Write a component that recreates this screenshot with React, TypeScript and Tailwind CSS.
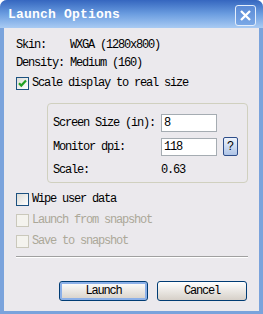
import React from "react";

const mono = { fontFamily: '"Liberation Mono", "DejaVu Sans Mono", monospace' };

function CheckBox({ checked, disabled }: { checked?: boolean; disabled?: boolean }) {
  return (
    <div
      className={
        "w-[13px] h-[13px] shrink-0 border flex items-center justify-center " +
        (disabled
          ? "border-[#cac8bb] bg-[#f4f3ee]"
          : "border-[#1c5180] bg-gradient-to-br from-[#dcdcd7] to-[#ffffff]")
      }
    >
      {checked && (
        <svg width="11" height="11" viewBox="0 0 11 11">
          <path d="M2 5.2 L4.3 7.6 L9 2.6" stroke="#21a121" strokeWidth="2.2" fill="none" />
        </svg>
      )}
    </div>
  );
}

export default function App() {
  return (
    <div
      className="w-[263px] h-[314px] flex flex-col rounded-t-[7px] overflow-hidden bg-[#7aa3dc] text-[12px] tracking-[-1.2px] text-black"
      style={mono}
    >
      {/* Title bar */}
      <div className="h-[28px] shrink-0 flex items-center pl-[8px] pr-[7px] bg-gradient-to-b from-[#3566bf] via-[#6b9de0] to-[#a9cbf3]">
        <span className="flex-1 text-white font-bold text-[13px] tracking-[0.2px] leading-none mt-[1px]">
          Launch Options
        </span>
        <div className="w-[21px] h-[21px] rounded-[3px] border border-[#e4eefb] bg-gradient-to-b from-[#5a8ad6] to-[#7aa8e6] flex items-center justify-center mt-[2px]">
          <svg width="13" height="13" viewBox="0 0 13 13">
            <path d="M2 2 L11 11 M11 2 L2 11" stroke="white" strokeWidth="2.3" />
          </svg>
        </div>
      </div>

      {/* Client area */}
      <div className="flex-1 mx-[4px] mb-[3px] bg-[#ebe9ed] flex flex-col pl-[12px] pr-[11px] pt-[8px]">
        <div className="h-[18px] flex items-center">
          <span className="w-[54px]">Skin:</span>
          <span>WXGA (1280x800)</span>
        </div>
        <div className="h-[18px] flex items-center">
          <span className="w-[54px]">Density:</span>
          <span>Medium (160)</span>
        </div>
        <div className="h-[18px] mt-[2px] flex items-center gap-[3px]">
          <CheckBox checked />
          <span>Scale display to real size</span>
        </div>

        {/* Group box */}
        <div className="ml-[31px] mt-[11px] w-[201px] h-[80px] border border-[#d0d0bf] rounded-[4px] flex flex-col pl-[5px] pt-[10px]">
          <div className="h-[18px] flex items-center">
            <span className="w-[108px]">Screen Size (in):</span>
            <div className="w-[56px] h-[18px] bg-white border border-[#a5acb2] flex items-center pl-[2px]">8</div>
          </div>
          <div className="h-[19px] mt-[5px] flex items-center">
            <span className="w-[108px]">Monitor dpi:</span>
            <div className="w-[56px] h-[18px] bg-white border border-[#a5acb2] flex items-center pl-[2px]">118</div>
            <div className="ml-[6px] w-[15px] h-[19px] rounded-[2px] border border-[#2e4e8a] bg-gradient-to-b from-[#eef3fb] to-[#aec4e6] flex items-center justify-center tracking-normal text-[12px]">
              ?
            </div>
          </div>
          <div className="h-[18px] mt-[5px] flex items-center">
            <span className="w-[108px]">Scale:</span>
            <span>0.63</span>
          </div>
        </div>

        <div className="h-[18px] mt-[7px] flex items-center gap-[3px]">
          <CheckBox />
          <span>Wipe user data</span>
        </div>
        <div className="h-[18px] mt-[3px] flex items-center gap-[3px] text-[#aca899]">
          <CheckBox disabled />
          <span>Launch from snapshot</span>
        </div>
        <div className="h-[18px] mt-[3px] flex items-center gap-[3px] text-[#aca899]">
          <CheckBox disabled />
          <span>Save to snapshot</span>
        </div>

        <div className="mt-[6px] h-[1px] bg-[#a0a0a0] border-b border-white box-content" />

        <div className="mt-[23px] flex justify-end gap-[9px] pr-[1px]">
          <div className="w-[89px] h-[20px] rounded-[3px] border border-[#003c74] bg-gradient-to-b from-[#ffffff] to-[#d6d0c8] flex items-center justify-center shadow-[inset_0_0_0_2px_#8cb0e8]">
            Launch
          </div>
          <div className="w-[90px] h-[20px] rounded-[3px] border border-[#003c74] bg-gradient-to-b from-[#ffffff] to-[#d6d0c8] flex items-center justify-center">
            Cancel
          </div>
        </div>
      </div>
    </div>
  );
}
